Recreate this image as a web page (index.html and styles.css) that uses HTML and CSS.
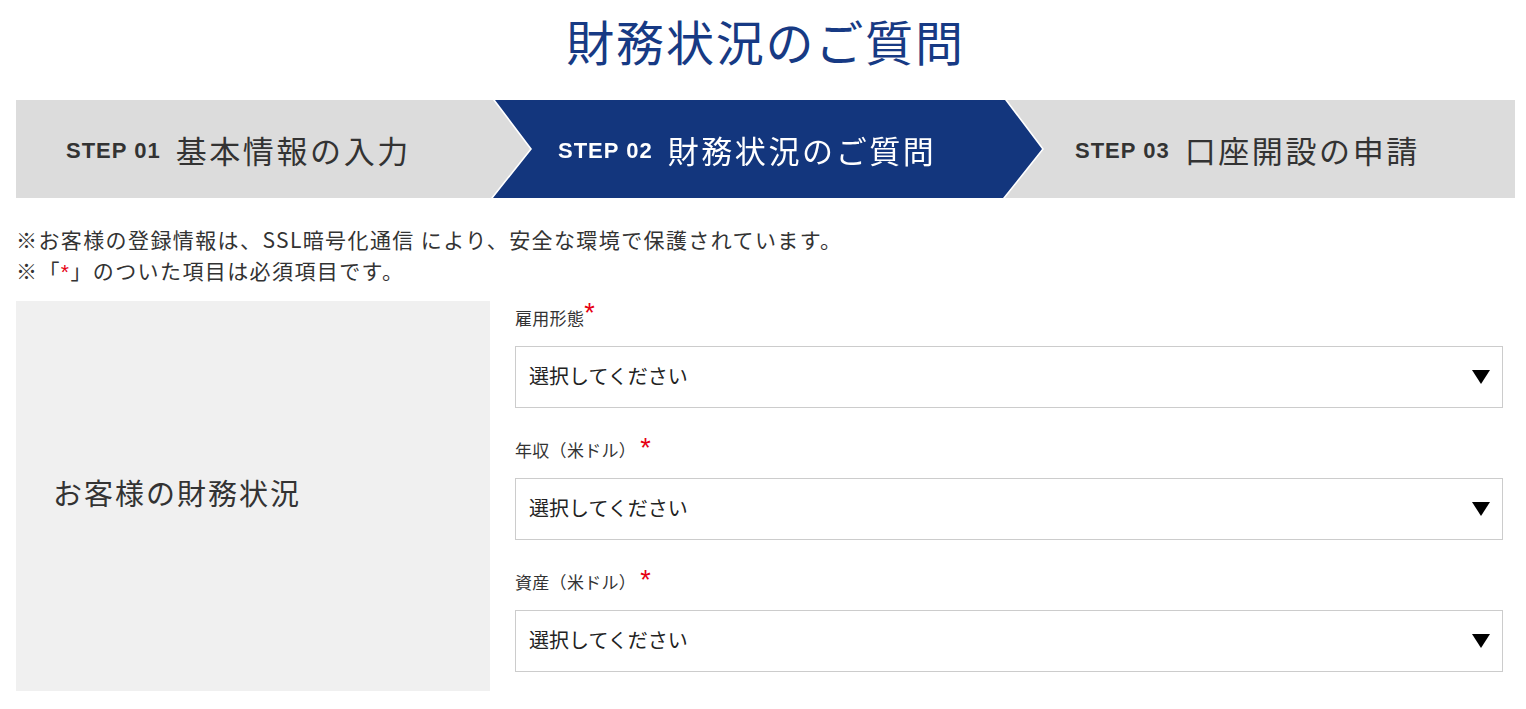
FILE: index.html
```html
<!DOCTYPE html>
<html lang="ja">
<head>
<meta charset="utf-8">
<title>財務状況のご質問</title>
<link rel="stylesheet" href="styles.css">
</head>
<body>
<div class="page">
  <h1 class="page-title">財務状況のご質問</h1>

  <ol class="steps">
    <li class="step step-done">
      <span class="step-no">STEP 01</span><span class="step-name">基本情報の入力</span>
    </li>
    <li class="step step-current">
      <div class="step-shape">
        <span class="step-no">STEP 02</span><span class="step-name">財務状況のご質問</span>
      </div>
    </li>
    <li class="step step-next">
      <span class="step-no">STEP 03</span><span class="step-name">口座開設の申請</span>
    </li>
  </ol>

  <div class="notes">
    <p>※お客様の登録情報は、SSL暗号化通信 により、安全な環境で保護されています。</p>
    <p>※「<span class="mark">*</span>」のついた項目は必須項目です。</p>
  </div>

  <section class="fin">
    <div class="fin-head">お客様の財務状況</div>
    <div class="fin-body">
      <div class="field">
        <div class="field-label">雇用形態<span class="req req-tight">*</span></div>
        <div class="select"><span class="select-text">選択してください</span><svg class="select-arrow" width="18" height="14" viewBox="0 0 18 14"><polygon points="0,0 18,0 9,14" fill="#000"/></svg></div>
      </div>
      <div class="field">
        <div class="field-label">年収（米ドル） <span class="req">*</span></div>
        <div class="select"><span class="select-text">選択してください</span><svg class="select-arrow" width="18" height="14" viewBox="0 0 18 14"><polygon points="0,0 18,0 9,14" fill="#000"/></svg></div>
      </div>
      <div class="field">
        <div class="field-label">資産（米ドル） <span class="req">*</span></div>
        <div class="select"><span class="select-text">選択してください</span><svg class="select-arrow" width="18" height="14" viewBox="0 0 18 14"><polygon points="0,0 18,0 9,14" fill="#000"/></svg></div>
      </div>
    </div>
  </section>
</div>
</body>
</html>
```

FILE: styles.css
```css
* { box-sizing: border-box; }

html, body {
  margin: 0;
  padding: 0;
  background: #fff;
}

body {
  font-family: "Noto Sans CJK JP", "Noto Sans", sans-serif;
  color: #333;
}

.page {
  width: 1499px;
  margin-left: 16px;
}

.page-title {
  margin: 15px 0 35px;
  font-size: 48px;
  line-height: 50px;
  font-weight: 400;
  letter-spacing: 1.8px;
  text-align: center;
  color: #173a84;
}

.steps {
  list-style: none;
  margin: 0;
  padding: 0;
  display: flex;
  height: 98px;
  background: #dcdcdc;
}

.step {
  display: flex;
  align-items: center;
  height: 98px;
  color: #333;
}

.step-done {
  width: 477px;
  padding-left: 50px;
}

.step-current {
  width: 549px;
  margin-right: -37px;
  position: relative;
  z-index: 1;
  filter: drop-shadow(-2px 0 0 #fff) drop-shadow(2px 0 0 #fff);
}

.step-shape {
  width: 100%;
  height: 100%;
  display: flex;
  align-items: center;
  padding-left: 65px;
  background: #13367d;
  color: #fff;
  clip-path: polygon(2px 0, 512px 0, 549px 49px, 510px 98px, 0 98px, 39px 49px);
}

.step-next {
  flex: 1;
  padding-left: 70px;
}

.step-no {
  font-family: "Liberation Sans", Arial, sans-serif;
  font-weight: 700;
  font-size: 22px;
  letter-spacing: 1px;
  margin-right: 15px;
  padding-top: 3px;
}

.step-name {
  font-size: 31px;
  letter-spacing: 2.6px;
}

.notes {
  margin-top: 26px;
  font-size: 21px;
  line-height: 31px;
  letter-spacing: 1.4px;
  color: #333;
}

.notes p {
  margin: 0;
}

.mark {
  color: #e60012;
  font-family: "Liberation Sans", Arial, sans-serif;
}

.fin {
  display: flex;
  margin-top: 14px;
}

.fin-head {
  width: 474px;
  flex: none;
  display: flex;
  align-items: center;
  padding: 0 0 8px 37px;
  background: #f0f0f0;
  font-size: 29px;
  letter-spacing: 2px;
  color: #333;
}

.fin-body {
  flex: 1;
  margin-left: 25px;
  margin-right: 12px;
  padding: 5px 0 19px;
}

.field + .field {
  margin-top: 30px;
}

.field-label {
  height: 24px;
  line-height: 24px;
  font-size: 17px;
  letter-spacing: 0.3px;
  color: #333;
  margin-bottom: 16px;
  white-space: pre;
}

.req {
  color: #e60012;
  font-family: "Liberation Sans", Arial, sans-serif;
  font-size: 27px;
  line-height: 0;
  vertical-align: 0;
}

.req-tight {
  vertical-align: 3px;
}

.select {
  height: 62px;
  border: 1px solid #cccccc;
  background: #fff;
  display: flex;
  align-items: center;
  justify-content: space-between;
  padding: 0 12px 3px 13px;
}

.select-text {
  font-size: 20px;
  color: #222;
}

.select-arrow {
  display: block;
  flex: none;
  margin-top: 3px;
}
```
